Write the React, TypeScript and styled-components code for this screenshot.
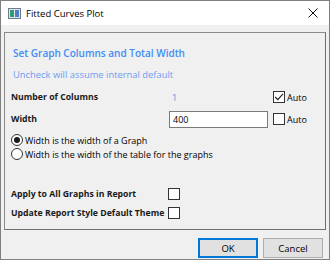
import React, { useState } from 'react';
import styled, { createGlobalStyle } from 'styled-components';

const GlobalStyle = createGlobalStyle`
  html, body {
    margin: 0;
    padding: 0;
    background: #ffffff;
  }
  body {
    font-family: "Open Sans", "Noto Sans", sans-serif;
  }
`;

const Window = styled.div`
  box-sizing: border-box;
  width: 330px;
  height: 260px;
  border: 1px solid #7f7f7f;
  display: flex;
  flex-direction: column;
  background: #f0f0f0;
  overflow: hidden;
`;

const TitleBar = styled.div`
  height: 24px;
  background: #ffffff;
  display: flex;
  align-items: center;
  padding: 0 0 0 7px;
`;

const TitleText = styled.span`
  flex: 1;
  margin-left: 5px;
  font-size: 9.5px;
  color: #000;
`;

const CloseButton = styled.div`
  width: 30px;
  height: 24px;
  display: flex;
  align-items: center;
  justify-content: center;
  margin-right: 1px;
`;

const Body = styled.div`
  flex: 1;
  display: flex;
  flex-direction: column;
  padding: 7px 3px 0 3px;
`;

const Panel = styled.div`
  box-sizing: border-box;
  height: 198px;
  border: 1px solid #8a8a8a;
  border-right-color: #6f6f6f;
  border-bottom-color: #6f6f6f;
  padding: 13px 6px 0 6px;
  display: flex;
  flex-direction: column;
`;

const Heading = styled.div`
  margin-left: 2px;
  font-size: 10px;
  font-weight: 600;
  color: #3f8cf5;
  line-height: 14px;
`;

const Note = styled.div`
  margin: 8px 0 0 2px;
  font-size: 9.4px;
  color: #6e9ef0;
  line-height: 14px;
`;

const SettingsGrid = styled.div`
  margin-top: 4px;
  display: grid;
  grid-template-columns: 158px 99px auto;
  grid-auto-rows: 22px;
  align-items: center;
`;

const Label = styled.div`
  font-size: 8.7px;
  font-weight: 700;
  color: #1a1a1a;
  white-space: nowrap;
`;

const Value = styled.div`
  padding-left: 3px;
  font-size: 9px;
  color: #5b8fd8;
`;

const TextBox = styled.input`
  box-sizing: border-box;
  width: 99px;
  height: 17px;
  border: 1px solid #7a7a7a;
  background: #fff;
  padding: 0 3px;
  font-family: inherit;
  font-size: 9px;
  color: #000;
  outline: none;
`;

const CheckLabel = styled.label`
  display: flex;
  align-items: center;
  margin-left: 5px;
  font-size: 9px;
  color: #000;
`;

const Box = styled.span<{ $gap?: number }>`
  box-sizing: border-box;
  width: 12px;
  height: 12px;
  border: 1px solid #333;
  background: #fff;
  display: inline-flex;
  align-items: center;
  justify-content: center;
  margin-right: ${p => p.$gap ?? 0}px;
`;

const RadioGroup = styled.div`
  margin-top: 4px;
  display: flex;
  flex-direction: column;
  gap: 2px;
`;

const RadioRow = styled.label`
  display: flex;
  align-items: center;
  height: 12px;
  font-size: 9px;
  color: #000;
`;

const RadioCircle = styled.span<{ $on: boolean }>`
  box-sizing: border-box;
  width: 12px;
  height: 12px;
  border-radius: 50%;
  border: 1px solid #333;
  background: #fff;
  margin-right: 2px;
  display: inline-flex;
  align-items: center;
  justify-content: center;
  &::after {
    content: '';
    width: 6px;
    height: 6px;
    border-radius: 50%;
    background: ${p => (p.$on ? '#1a1a1a' : 'transparent')};
  }
`;

const OptionsGrid = styled.div`
  margin-top: 24px;
  display: grid;
  grid-template-columns: 157px 12px;
  grid-auto-rows: 19px;
  align-items: center;
`;

const Footer = styled.div`
  display: flex;
  justify-content: flex-end;
  gap: 5px;
  padding: 8px 3px 0 0;
`;

const Button = styled.button<{ $primary?: boolean }>`
  box-sizing: border-box;
  width: 60px;
  height: 20px;
  background: #e1e1e1;
  border: 1px solid ${p => (p.$primary ? '#0078d7' : '#adadad')};
  box-shadow: ${p => (p.$primary ? 'inset 0 0 0 1px #0078d7' : 'none')};
  font-family: inherit;
  font-size: 9.5px;
  color: #000;
  padding: 0;
`;

const Tick = () => (
  <svg width="10" height="10" viewBox="0 0 10 10">
    <path d="M1.2 5 L3.8 7.6 L9 1.8" fill="none" stroke="#222" strokeWidth="1.1" />
  </svg>
);

const AppIcon = () => (
  <svg width="13" height="11" viewBox="0 0 13 11">
    <rect x="0.5" y="0.5" width="12" height="10" fill="#dfe6ee" stroke="#6d7b8a" />
    <rect x="2" y="2" width="4" height="7" fill="#2f9c78" />
    <rect x="7" y="2" width="4" height="7" fill="#4f7fc9" />
  </svg>
);

const CloseIcon = () => (
  <svg width="10" height="10" viewBox="0 0 10 10">
    <path d="M0.5 0.5 L9.5 9.5 M9.5 0.5 L0.5 9.5" stroke="#111" strokeWidth="1" />
  </svg>
);

const App: React.FC = () => {
  const [width, setWidth] = useState('400');
  const [graphMode, setGraphMode] = useState(true);

  return (
    <>
      <GlobalStyle />
      <Window>
        <TitleBar>
          <AppIcon />
          <TitleText>Fitted Curves Plot</TitleText>
          <CloseButton>
            <CloseIcon />
          </CloseButton>
        </TitleBar>
        <Body>
          <Panel>
            <Heading>Set Graph Columns and Total Width</Heading>
            <Note>Uncheck will assume internal default</Note>

            <SettingsGrid>
              <Label>Number of Columns</Label>
              <Value>1</Value>
              <CheckLabel>
                <Box $gap={2}><Tick /></Box>Auto
              </CheckLabel>

              <Label>Width</Label>
              <TextBox value={width} onChange={e => setWidth(e.target.value)} />
              <CheckLabel>
                <Box $gap={2} />Auto
              </CheckLabel>
            </SettingsGrid>

            <RadioGroup>
              <RadioRow onClick={() => setGraphMode(true)}>
                <RadioCircle $on={graphMode} />
                Width is the width of a Graph
              </RadioRow>
              <RadioRow onClick={() => setGraphMode(false)}>
                <RadioCircle $on={!graphMode} />
                Width is the width of the table for the graphs
              </RadioRow>
            </RadioGroup>

            <OptionsGrid>
              <Label>Apply to All Graphs in Report</Label>
              <Box />
              <Label>Update Report Style Default Theme</Label>
              <Box />
            </OptionsGrid>
          </Panel>
          <Footer>
            <Button $primary>OK</Button>
            <Button>Cancel</Button>
          </Footer>
        </Body>
      </Window>
    </>
  );
};

export default App;
